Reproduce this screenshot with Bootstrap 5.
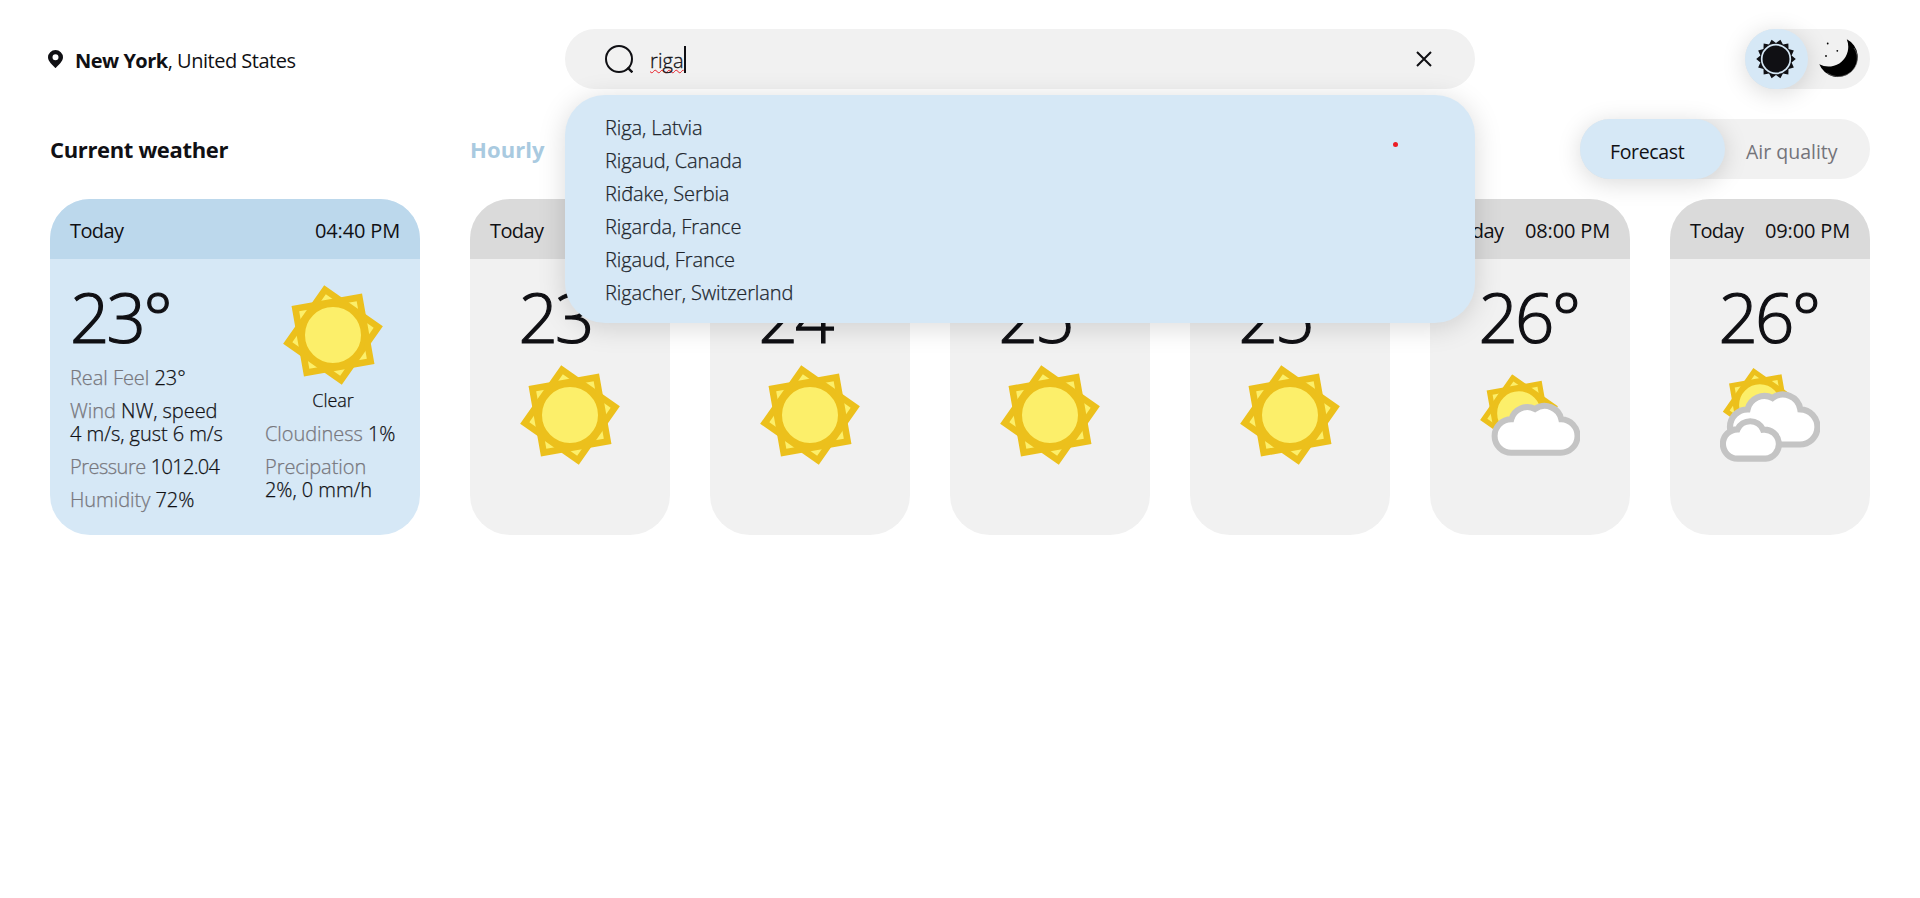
<!DOCTYPE html>
<html lang="en">
<head>
<meta charset="utf-8">
<meta name="viewport" content="width=device-width, initial-scale=1">
<title>Weather</title>
<link rel="stylesheet" href="https://cdn.jsdelivr.net/npm/bootstrap@5.3.0/dist/css/bootstrap.min.css">
<style>
  body { font-family: "Open Sans", "Noto Sans", sans-serif; font-size: 20px; line-height: 23px; color: #101014; background: #fff; letter-spacing: -.25px; }
  .page { padding: 29px 50px 0; }
  .top-bar { height: 60px; }
  .place { width: 515px; padding-top: 3px; margin-left: -2px; }
  .place svg { margin: -3px 12px 0 0; }
  .place-name { letter-spacing: -.5px; }
  .search { width: 910px; margin-left: 2px; }
  .search-field { height: 60px; border-radius: 30px; background: #f1f1f1; padding: 0 43px 0 40px; }
  .query { margin-left: 17px; padding-top: 3px; font-weight: 300; -webkit-text-stroke: .3px #101014; letter-spacing: .1px; text-decoration: underline wavy #e8202a 1px; text-underline-offset: 1px; text-decoration-skip-ink: none; }
  .caret { width: 2px; height: 27px; background: #101014; margin-left: 0; }
  .hints { top: 66px; left: 0; height: 228px; border-radius: 40px; background: #d6e8f6; padding: 21px 40px; box-shadow: 0 4px 28px rgba(0,0,0,.15); z-index: 5; font-weight: 300; -webkit-text-stroke: .25px; color: #20252c; letter-spacing: -.1px; }
  .hints li { line-height: 23px; margin-bottom: 10px; }
  .hint-dot { width: 5px; height: 5px; right: 77px; top: 47px; background: #ec1c24; }
  .switch-box { height: 60px; border-radius: 30px; background: #f1f1f1; }
  .switch-box > div { height: 60px; border-radius: 30px; }
  .switch-on { background: #d6e8f6; box-shadow: 0 4px 24px rgba(0,0,0,.15); }
  .theme > div { width: 62.5px; }
  .mode { width: 290px; font-weight: 500; font-size: 19.5px; letter-spacing: -.35px; }
  .mode > div { width: 145px; padding-top: 21px; }
  .mode > .switch-on { padding-left: 30px; }
  .mode > .switch-off { padding-left: 21px; color: #74747a; letter-spacing: 0; }
  .title-row { margin-top: 30px; height: 60px; }
  .title-text { font-size: 22px; font-weight: 700; padding-top: 19px; }
  .title-now { width: 420px; letter-spacing: -.35px; }
  .title-hourly { color: #a9cae0; letter-spacing: .1px; }
  .cards { margin-top: 20px; }
  .tile { width: 200px; height: 336px; border-radius: 40px; background: #f1f1f1; overflow: hidden; margin-right: 40px; }
  .tile:last-child { margin-right: 0; }
  .tile-head { height: 60px; padding: 2px 20px 0; background: #dadada; font-weight: 500; letter-spacing: -.15px; }
  .tile-head span:first-child { letter-spacing: -.6px; }
  .tile-now { width: 370px; background: #d6e8f6; margin-right: 50px; }
  .tile-now .tile-head { background: #bcd8ec; }
  .temp { font-size: 69px; line-height: 70px; font-weight: 300; -webkit-text-stroke: 1.2px; margin-top: 22px; padding-right: 3px; letter-spacing: -2.8px; }
  .tile-now .temp { margin-bottom: 15px; }
  .facts { font-weight: 300; letter-spacing: -.05px; }
  .facts p, .sky { -webkit-text-stroke: .25px; }
  .facts p { margin: 0 0 10px; white-space: nowrap; }
  .facts span { color: #77777d; }
  .num { letter-spacing: -.7px; }
  .facts .snug { letter-spacing: -.5px; }
  .col-a { width: 195px; }
  .col-b { width: 136px; padding-top: 26px; }
  .sky { font-size: 18px; margin: 4px 0 10px; }
</style>
</head>
<body>
<svg class="d-none">
  <symbol id="sun" viewBox="0 0 100 100">
    <g fill="#fcef6a"><rect x="17.5" y="17.5" width="65" height="65" transform="rotate(35 50 50)"/><rect x="17.5" y="17.5" width="65" height="65" transform="rotate(-10 50 50)"/></g>
    <g fill="none" stroke="#ecc01c" stroke-width="6.6"><rect x="17.5" y="17.5" width="65" height="65" transform="rotate(35 50 50)"/><rect x="17.5" y="17.5" width="65" height="65" transform="rotate(-10 50 50)"/></g>
    <circle cx="50" cy="50" r="30.5" fill="#fcef6a" stroke="#ecc01c" stroke-width="5"/>
  </symbol>
  <symbol id="partly" viewBox="0 0 100 100">
    <use href="#sun" x="0" y="9.2" width="78" height="78"/>
    <path d="M31.3 87.7A16.7 16.7 0 0 1 31.3 54.3A16.5 16.5 0 0 1 55 44A17 17 0 0 1 81.3 54.3A16.7 16.7 0 0 1 80.3 87.7Z" fill="#fff" stroke="#c4c4c4" stroke-width="6"/>
  </symbol>
  <symbol id="cloudy" viewBox="0 0 100 100">
    <use href="#sun" x="2.7" y="3" width="74.4" height="74.4"/>
    <g fill="#fff" stroke="#c4c4c4" stroke-width="6.2">
      <path d="M27.6 79.5A17.6 17.6 0 0 1 27.6 44.3A17.3 17.3 0 0 1 52.5 33A17.6 17.6 0 0 1 80.3 44.3A17.6 17.6 0 0 1 79.4 79.5Z"/>
      <path d="M17.7 93.7A14.7 14.7 0 0 1 17.5 64.3A14 14 0 0 1 43 64.6A14.6 14.6 0 0 1 45.6 93.7Z"/>
    </g>
  </symbol>
</svg>

<div class="page">
  <header class="top-bar d-flex">
    <div class="place d-flex align-items-center">
      <svg width="15" height="18" viewBox="0 0 15 18" fill="#101014"><path fill-rule="evenodd" d="M7.5 0A7.5 7.3 0 0 1 15 7.3C15 11.3 10.5 15.2 7.5 18.2C4.500 15.200 0 11.300 0 7.300A7.500 7.300 0 0 1 7.500 0ZM7.500 4.300A3 3 0 1 0 7.500 10.300A3 3 0 1 0 7.500 4.300Z"/></svg>
      <div class="place-name"><b>New York</b>, United States</div>
    </div>
    <div class="search position-relative">
      <div class="search-field d-flex align-items-center">
        <svg width="28" height="28" viewBox="0 0 28 28" fill="none" stroke="#101014" stroke-width="2"><circle cx="14" cy="14" r="13"/><path d="M22.500 22.500L27.400 27.400" stroke-width="2.400"/></svg>
        <span class="query">riga</span><span class="caret"></span>
        <svg class="ms-auto" width="16" height="16" viewBox="0 0 16 16" stroke="#101014" stroke-width="2"><path d="M1 1L15 15M15 1L1 15"/></svg>
      </div>
      <ul class="hints list-unstyled position-absolute w-100 mb-0">
        <li>Riga, Latvia</li><li>Rigaud, Canada</li><li>Riđake, Serbia</li><li>Rigarda, France</li><li>Rigaud, France</li><li>Rigacher, Switzerland</li>
        <li class="hint-dot position-absolute rounded-circle"></li>
      </ul>
    </div>
    <div class="switch-box theme d-flex ms-auto">
      <div class="switch-on d-flex align-items-center justify-content-center">
        <svg width="40" height="40" viewBox="-20 -20 40 40"><polygon id="rays" fill="#101014"/><circle r="14.300" fill="#101014" stroke="#d6e8f6" stroke-width="1.700"/></svg>
      </div>
      <div class="d-flex align-items-center justify-content-center">
        <svg width="40" height="40" viewBox="0 0 40 40"><path d="M27.800 .3A19.900 19.900 0 1 1 .3 25.300A19.800 19.800 0 0 0 27.800 .3Z"/><path d="M35 9A17.800 17.800 0 0 1 28 35.500Q18 40.500 8 34" fill="none" stroke="#777" stroke-width=".6"/><circle cx="8.700" cy="4.500" r=".9"/><circle cx="18.300" cy="11.800" r=".9"/><circle cx="7" cy="17" r=".9"/></svg>
      </div>
    </div>
  </header>

  <div class="title-row d-flex">
    <div class="title-text title-now">Current weather</div>
    <div class="title-text title-hourly">Hourly</div>
    <div class="switch-box mode d-flex ms-auto">
      <div class="switch-on">Forecast</div><div class="switch-off">Air quality</div>
    </div>
  </div>

  <main class="cards d-flex" id="cards">
    <section class="tile tile-now flex-shrink-0">
      <div class="tile-head d-flex align-items-center justify-content-between"><span>Today</span><span>04:40 PM</span></div>
      <div class="d-flex facts ps-3 ms-1">
        <div class="col-a">
          <div class="temp">23°</div>
          <p><span>Real Feel</span> 23°</p>
          <p><span>Wind</span> NW, speed<br>4 m/s, gust 6 m/s</p>
          <p><span class="snug">Pressure</span> <em class="num fst-normal">1012.04</em></p>
          <p><span>Humidity</span> 72%</p>
        </div>
        <div class="col-b">
          <svg class="d-block mx-auto" width="100" height="100"><use href="#sun"/></svg>
          <div class="sky text-center">Clear</div>
          <p><span>Cloudiness</span> 1%</p>
          <p><span>Precipation</span><br>2%, 0 mm/h</p>
        </div>
      </div>
    </section>
  </main>
</div>
<script src="https://cdn.jsdelivr.net/npm/bootstrap@5.3.0/dist/js/bootstrap.bundle.min.js"></script>
<script>
  // Hourly forecast tiles
  [["04:00 PM", 23, "sun"], ["05:00 PM", 24, "sun"], ["06:00 PM", 25, "sun"], ["07:00 PM", 25, "sun"], ["08:00 PM", 26, "partly"], ["09:00 PM", 26, "cloudy"]].forEach(function (h) {
    document.getElementById("cards").insertAdjacentHTML("beforeend",
      '<section class="tile flex-shrink-0"><div class="tile-head d-flex align-items-center justify-content-between"><span>Today</span><span>' + h[0] +
      '</span></div><div class="temp text-center">' + h[1] + '°</div><svg class="d-block mx-auto" style="margin-top:14px" width="100" height="100"><use href="#' + h[2] + '"/></svg></section>');
  });
  // 14 rays of the day icon
  var pts = [];
  for (var i = 0; i < 28; i++) {
    var r = i % 2 ? 16 : 19.8, a = i * Math.PI / 14;
    pts.push((r * Math.cos(a)).toFixed(2) + "," + (r * Math.sin(a)).toFixed(2));
  }
  document.getElementById("rays").setAttribute("points", pts.join(" "));
</script>
</body>
</html>
